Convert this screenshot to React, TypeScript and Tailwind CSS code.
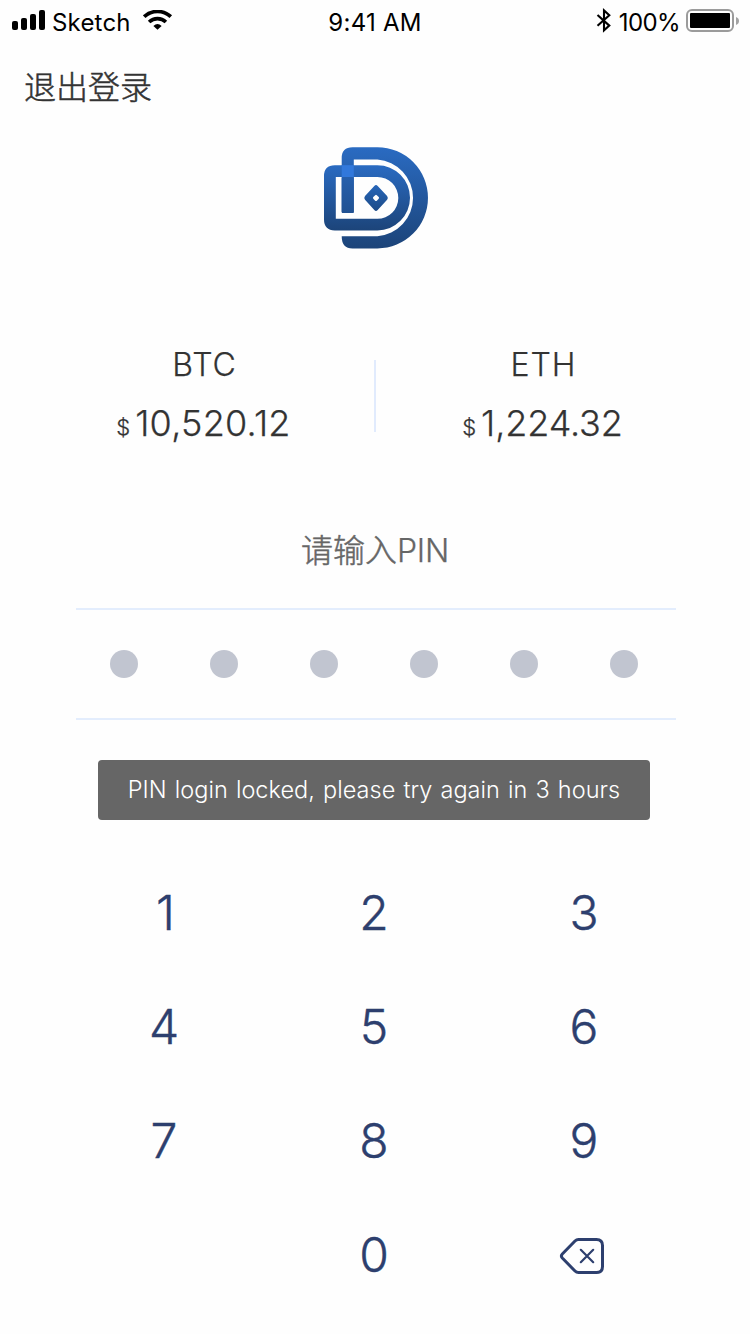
const keys = ["1", "2", "3", "4", "5", "6", "7", "8", "9", "", "0", "back"];

function Signal() {
  return (
    <svg width="34" height="20" viewBox="0 0 34 20" className="block">
      <rect x="0" y="11" width="6" height="9" rx="2" />
      <rect x="9" y="8" width="6" height="12" rx="2" />
      <rect x="18" y="4" width="6" height="16" rx="2" />
      <rect x="27" y="0" width="6" height="20" rx="2" />
    </svg>
  );
}

function Wifi() {
  return (
    <svg width="30" height="20" viewBox="0 0 30 20" className="block">
      <g fill="none" stroke="#000" strokeWidth="3.7">
        <path d="M1.2 6.7 A19.5 19.5 0 0 1 27.8 6.7" />
        <path d="M6.1 12 A12.3 12.3 0 0 1 22.9 12" />
      </g>
      <path d="M10.4 15.9 Q14.5 12.3 18.6 15.9 L14.5 19.8 Z" />
    </svg>
  );
}

function Bluetooth() {
  return (
    <svg width="16" height="25" viewBox="0 0 16 25" className="block">
      <path
        d="M1.5 7 L13.3 17.6 L8 22.4 V2.4 L13.3 7.2 L1.5 17.8"
        fill="none"
        stroke="#000"
        strokeWidth="2.1"
      />
    </svg>
  );
}

function Battery() {
  return (
    <svg width="53" height="24" viewBox="0 0 53 24" className="block">
      <rect x="1" y="1" width="46" height="21" rx="5" fill="none" stroke="#9b9b9b" strokeWidth="2" />
      <rect x="4" y="4" width="40" height="15" rx="1" />
      <path d="M50 8 Q53 9.2 53 12 Q53 14.8 50 16 Z" fill="#a3a3a3" />
    </svg>
  );
}

function Logo() {
  return (
    <svg width="106" height="104" viewBox="323 146 106 104" className="block">
      <defs>
        <linearGradient id="outer" gradientUnits="userSpaceOnUse" x1="0" y1="147" x2="0" y2="248">
          <stop offset="0" stopColor="#2a6bc2" />
          <stop offset="1" stopColor="#1c4479" />
        </linearGradient>
        <linearGradient id="inner" gradientUnits="userSpaceOnUse" x1="0" y1="165" x2="0" y2="231">
          <stop offset="0" stopColor="#2a6bc2" />
          <stop offset="1" stopColor="#1c4479" />
        </linearGradient>
        <linearGradient id="gem" gradientUnits="userSpaceOnUse" x1="0" y1="184" x2="0" y2="212">
          <stop offset="0" stopColor="#2767bb" />
          <stop offset="1" stopColor="#1d4a85" />
        </linearGradient>
      </defs>
      <path
        fill="url(#outer)"
        d="M341.7 211.5 V158 Q341.7 147.2 352.5 147.2 H377.4 A50.6 50.6 0 0 1 377.4 248.4 H352.5 Q341.7 248.4 341.7 236.2 H377.4 A38.4 38.4 0 0 0 377.4 159.6 H353.8 V211.5 Q353.8 213 352.3 213 H343.2 Q341.7 213 341.7 211.5 Z"
      />
      <path
        fill="url(#inner)"
        fillRule="evenodd"
        d="M334.8 165.2 H377.4 A32.6 32.6 0 0 1 377.4 230.4 H334.8 Q324 230.4 324 219.6 V176 Q324 165.2 334.8 165.2 Z M335.8 177 V218.8 H377.4 A20.9 20.9 0 0 0 377.4 177 Z"
      />
      <rect x="341.7" y="177" width="12.1" height="36" rx="1" fill="url(#outer)" />
      <rect x="341.7" y="165.2" width="12.1" height="11.8" fill="#3178db" />
      <path
        fill="url(#gem)"
        fillRule="evenodd"
        d="M374.3 185.9 Q376 184.2 377.7 185.9 L387.1 196 Q388.6 197.9 387.1 199.8 L377.7 210.1 Q376 211.8 374.3 210.1 L365 199.8 Q363.5 197.9 365 196 Z M375.2 195.2 L373.3 197.1 Q372.6 197.9 373.3 198.7 L375.2 200.7 Q376 201.4 376.8 200.7 L378.7 198.7 Q379.4 197.9 378.7 197.1 L376.8 195.2 Q376 194.4 375.2 195.2 Z"
      />
    </svg>
  );
}

function Backspace() {
  return (
    <svg width="46" height="38" viewBox="559 1237 46 38" className="block">
      <g fill="none" stroke="#2d3f6e" strokeLinecap="round" strokeLinejoin="round">
        <path
          strokeWidth="3"
          d="M578.5 1239.5 H596.5 Q602.5 1239.5 602.5 1245.5 V1266.5 Q602.5 1272.5 596.5 1272.5 H578.5 Q576.5 1272.5 575 1271 L562.3 1258 Q560.5 1256 562.3 1254 L575 1241 Q576.5 1239.5 578.5 1239.5 Z"
        />
        <path strokeWidth="2.2" d="M580.8 1249.8 L593.2 1262.2 M593.2 1249.8 L580.8 1262.2" />
      </g>
    </svg>
  );
}

function Price({ name, value, className, spacing }: { name: string; value: string; className: string; spacing: string }) {
  return (
    <div className={"flex flex-col items-center text-[#333] [-webkit-text-stroke:0.25px_#333] " + className}>
      <div className="h-[37px] pl-[2px] text-[32px] leading-[37px] tracking-[0.9px]">{name}</div>
      <div className="mt-[19px] flex h-[42px] items-start whitespace-nowrap">
        <span className="text-[22px] leading-[50px]">$</span>
        <span className={"ml-[5px] text-[36px] leading-[42px] " + spacing}>{value}</span>
      </div>
    </div>
  );
}

export default function App() {
  return (
    <div className="flex h-[1334px] w-[750px] flex-col overflow-hidden bg-[#fefefe] font-['Inter','Noto_Sans_CJK_SC',sans-serif] font-light">
      <header className="grid h-10 grid-cols-3 text-2xl font-normal leading-[45px] text-black">
        <div className="flex pl-3">
          <div className="pt-2.5"><Signal /></div>
          <span className="ml-[6px] tracking-[0.2px]">Sketch</span>
          <div className="ml-[12px] pt-2.5"><Wifi /></div>
        </div>
        <div className="text-center tracking-[0.25px]">9:41 AM</div>
        <div className="flex justify-end pr-[11px]">
          <div className="pt-2"><Bluetooth /></div>
          <span className="ml-[7px] tracking-[-0.6px]">100%</span>
          <div className="ml-[6px] pt-[9px]"><Battery /></div>
        </div>
      </header>

      <nav className="h-[94px] pl-6 pt-[2px] text-[32px] leading-[91px] text-[#333] [-webkit-text-stroke:0.5px_#333]">退出登录</nav>

      <div className="flex justify-center pl-[2px] pt-3"><Logo /></div>

      <section className="mt-[96px] flex h-[100px]">
        <Price name="BTC" value="10,520.12" className="w-[374px] pl-[33px]" spacing="tracking-[0.25px]" />
        <div className="mt-[14px] h-[72px] w-[2px] bg-[#e1ebfd]" />
        <Price name="ETH" value="1,224.32" className="w-[374px] pr-[41px]" spacing="tracking-[-0.1px]" />
      </section>

      <h1 className="mt-[82px] h-[45px] text-center text-[32px] leading-[45px] text-[#666]">
        <span className="[-webkit-text-stroke:0.5px_#666]">请输入</span>
        <span className="tracking-[-0.3px] [-webkit-text-stroke:0.25px_#666]">PIN</span>
      </h1>

      <div className="ml-[76px] mt-[35px] flex h-[112px] w-[600px] items-center justify-between border-y-2 border-[#e3edfd] pl-[34px] pr-[38px]">
        {[0, 1, 2, 3, 4, 5].map((i) => (
          <span key={i} className="size-7 rounded-full bg-[#c1c5d0]" />
        ))}
      </div>

      <div className="ml-[98px] mt-10 h-[60px] w-[552px] whitespace-nowrap rounded bg-[#666] text-center text-[23.5px] leading-[59px] tracking-[0.02px] text-white [word-spacing:1.5px]">
        PIN login locked, please try again in 3 hours
      </div>

      <div className="ml-[59px] mt-9 grid w-[630px] grid-cols-3 text-[48px] text-[#2d3f6e] [-webkit-text-stroke:0.4px_#2d3f6e]">
        {keys.map((k, i) => (
          <div key={i} className="flex h-[114px] justify-center leading-[113px]">
            {k === "back" ? (
              <div className="pr-[4px] pt-[39px]"><Backspace /></div>
            ) : (
              <span className={k === "1" ? "pl-[3px]" : ""}>{k}</span>
            )}
          </div>
        ))}
      </div>
    </div>
  );
}
